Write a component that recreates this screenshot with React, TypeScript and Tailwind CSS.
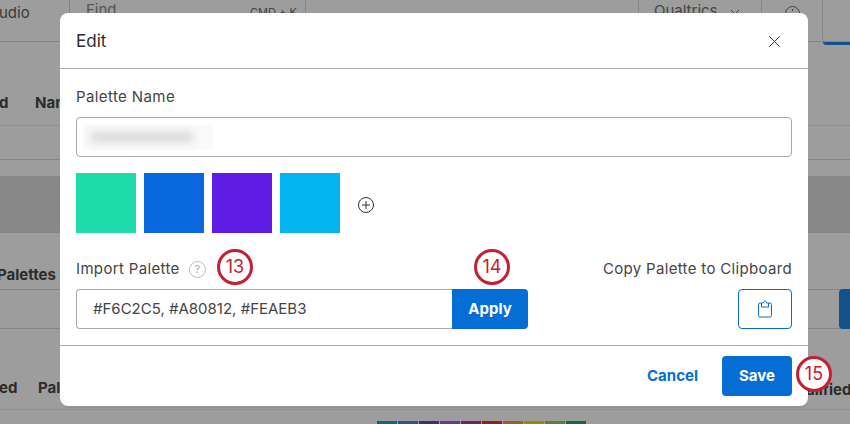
import React from "react";

const Badge = ({ n, className }: { n: string; className: string }) => (
  <div className={"absolute w-[36px] h-[36px] rounded-full bg-white border-[3px] border-[#c4202f] text-[#c4202f] flex items-center justify-center text-[18px] leading-none font-normal " + className}>{n}</div>
);

const Rule = ({ className = "" }: { className?: string }) => <div className={"h-px bg-[#858585] " + className} />;

export default function App() {
  const font = { fontFamily: 'Inter, "Noto Sans", sans-serif' };
  const colors = ["#0f6b73", "#2f5487", "#40306b", "#643c8c", "#6f2560", "#8b2323", "#96622a", "#96890f", "#5f7f35", "#166c40"];
  return (
    <div className="relative w-[850px] h-[424px] overflow-hidden bg-[#9d9d9d] text-[#2b2b2b]" style={font}>
      {/* background page */}
      <div className="flex flex-col h-full">
        <div className="h-[41px] flex shrink-0 overflow-hidden">
          <div className="text-[#3a3a3a] text-[15px] leading-[20px] pt-[3px] ml-[-1px]">udio</div>
        </div>
        <Rule />
        <div className="h-[83px] flex items-end pb-[11px] font-bold text-[15px] shrink-0">
          <span className="w-[36px] ml-[-1px]">d</span><span>Name</span>
        </div>
        <div className="h-[1px] bg-[#909090]" />
        <div className="h-[33px]" />
        <Rule />
        <div className="h-[16px]" />
        <Rule />
        <div className="h-[55px] bg-[#888888] shrink-0" />
        <Rule />
        <div className="h-[56px] flex items-end pb-[3px] font-bold text-[15px] shrink-0"><span className="ml-[-3px]">Palettes</span></div>
        <Rule />
        <div className="h-[38px]" />
        <Rule />
        <div className="h-[80px] flex items-end pb-[10px] font-bold text-[15px] shrink-0"><span className="w-[39px] ml-[-1px]">ed</span><span>Palette</span></div>
        <div className="h-[1px] bg-[#909090]" />
        <div className="flex gap-px pl-[377px] pt-[11px]">
          {colors.map((c) => <div key={c} className="w-[20px] h-[3px]" style={{ backgroundColor: c }} />)}
        </div>
      </div>

      {/* header items hidden behind the modal */}
      <div className="absolute left-[69px] top-0 w-px h-[13px] bg-[#858585]" />
      <div className="absolute left-[305px] top-0 w-px h-[13px] bg-[#858585]" />
      <div className="absolute left-[86px] top-[0px] text-[15px] leading-[20px] text-[#555]">Find</div>
      <div className="absolute left-[250px] top-[5px] text-[11px] leading-[14px] text-[#444]">CMD + K</div>
      <div className="absolute left-[638px] top-0 w-px h-[13px] bg-[#858585]" />
      <div className="absolute left-[654px] top-[1px] text-[15px] leading-[20px] text-[#444]">Qualtrics</div>
      <svg className="absolute left-[730px] top-[10px]" width="10" height="4" viewBox="0 0 10 4" fill="none" stroke="#444"><path d="M1 0l4 4 4-4" /></svg>
      <div className="absolute left-[761px] top-0 w-px h-[13px] bg-[#858585]" />
      <div className="absolute left-[785px] top-[6px] w-[15px] h-[15px] rounded-full border border-[#444]" />
      <div className="absolute left-[792px] top-[9px] w-px h-[2px] bg-[#444]" />
      <div className="absolute left-[822px] top-0 w-[28px] h-[42px] border-l border-[#858585] rounded-bl" />
      <div className="absolute left-[823px] top-[42px] w-[27px] h-[3px] bg-[#14508a] rounded-bl" />
      <div className="absolute left-[839px] top-[289px] w-[20px] h-[40px] bg-[#14508a] rounded" />
      <div className="absolute left-[806px] top-[380px] text-[15px] leading-[20px] font-bold whitespace-nowrap">alified</div>

      {/* modal */}
      <div className="absolute left-[60px] top-[13px] w-[748px] h-[393px] bg-white rounded-[8px] flex flex-col shadow-[0_2px_0_rgba(0,0,0,0.06)]">
        <div className="h-[56px] border-b border-[#a8a8a8] flex items-center justify-between pl-4 pr-[28px] pt-[2px] shrink-0">
          <span className="text-[17px] text-[#2b2b2b]">Edit</span>
          <svg width="11" height="11" viewBox="0 0 11 11" fill="none" stroke="#333" strokeWidth="1"><path d="M.3.3l10.4 10.4M10.7.3L.3 10.7" /></svg>
        </div>
        <div className="px-4 pt-[18px] flex flex-col grow">
          <label className="text-[15px] leading-[20px] text-[#444] tracking-[0.4px]">Palette Name</label>
          <div className="mt-[10px] h-[40px] border border-[#a8a8a8] rounded-[4px] flex items-center pl-[6px]">
            <div className="w-[130px] h-[25px] bg-[#fafafa] flex items-center pl-[8px]">
              <div className="w-[102px] h-[10px] bg-[#d8d8d8] blur-[4px]" />
            </div>
          </div>
          <div className="mt-[16px] flex gap-2 items-center">
            {["#20dcaa", "#0a68de", "#5f1ce4", "#02b4f0"].map((c) => (
              <div key={c} className="w-[60px] h-[60px]" style={{ backgroundColor: c }} />
            ))}
            <svg className="ml-[9px] mt-[3px]" width="18" height="18" viewBox="0 0 18 18" fill="none" stroke="#333" strokeWidth="1"><circle cx="9" cy="9" r="7.5" /><path d="M9 5v8M5 9h8" /></svg>
          </div>
          <div className="mt-[25px] flex justify-between items-center h-[22px]">
            <div className="flex items-center gap-[9px]">
              <span className="text-[15px] text-[#444] tracking-[0.35px]">Import Palette</span>
              <span className="w-[17px] h-[17px] rounded-full border border-[#bdbdbd] text-[#aaa] text-[11px] flex items-center justify-center leading-none">?</span>
            </div>
            <span className="text-[15px] text-[#444] tracking-[0.33px]">Copy Palette to Clipboard</span>
          </div>
          <div className="mt-[9px] flex justify-between">
            <div className="flex w-[452px] h-[40px]">
              <div className="w-[376px] border border-r-0 border-[#a8a8a8] rounded-l-[4px] flex items-center pl-4 text-[15px] text-[#444]">#F6C2C5, #A80812, #FEAEB3</div>
              <div className="w-[76px] bg-[#056ed4] text-white font-bold text-[15px] rounded-r-[4px] flex items-center justify-center">Apply</div>
            </div>
            <div className="w-[54px] h-[40px] border border-[#056ed4] rounded-[4px] flex items-center justify-center">
              <svg width="14" height="18" viewBox="0 0 14 18" fill="none" stroke="#056ed4" strokeWidth="1"><path d="M3.5 3H2A1.5 1.5 0 0 0 .5 4.5v11A1.5 1.5 0 0 0 2 17h10a1.5 1.5 0 0 0 1.5-1.5v-11A1.5 1.5 0 0 0 12 3h-1.5" /><path d="M3.5 7V3H5.5C5.7 1.7 6.2 1 7 1s1.3.7 1.5 2h2v4h-7z" /></svg>
            </div>
          </div>
        </div>
        <div className="h-[61px] border-t border-[#a8a8a8] flex items-center justify-end pr-4 gap-[24px] shrink-0">
          <span className="text-[#056ed4] font-bold text-[15px]">Cancel</span>
          <div className="w-[70px] h-[40px] bg-[#056ed4] text-white font-bold text-[15px] rounded-[4px] flex items-center justify-center">Save</div>
        </div>
      </div>

      <Badge n="13" className="left-[217px] top-[249px]" />
      <Badge n="14" className="left-[474px] top-[249px]" />
      <Badge n="15" className="left-[796px] top-[356px]" />
    </div>
  );
}
